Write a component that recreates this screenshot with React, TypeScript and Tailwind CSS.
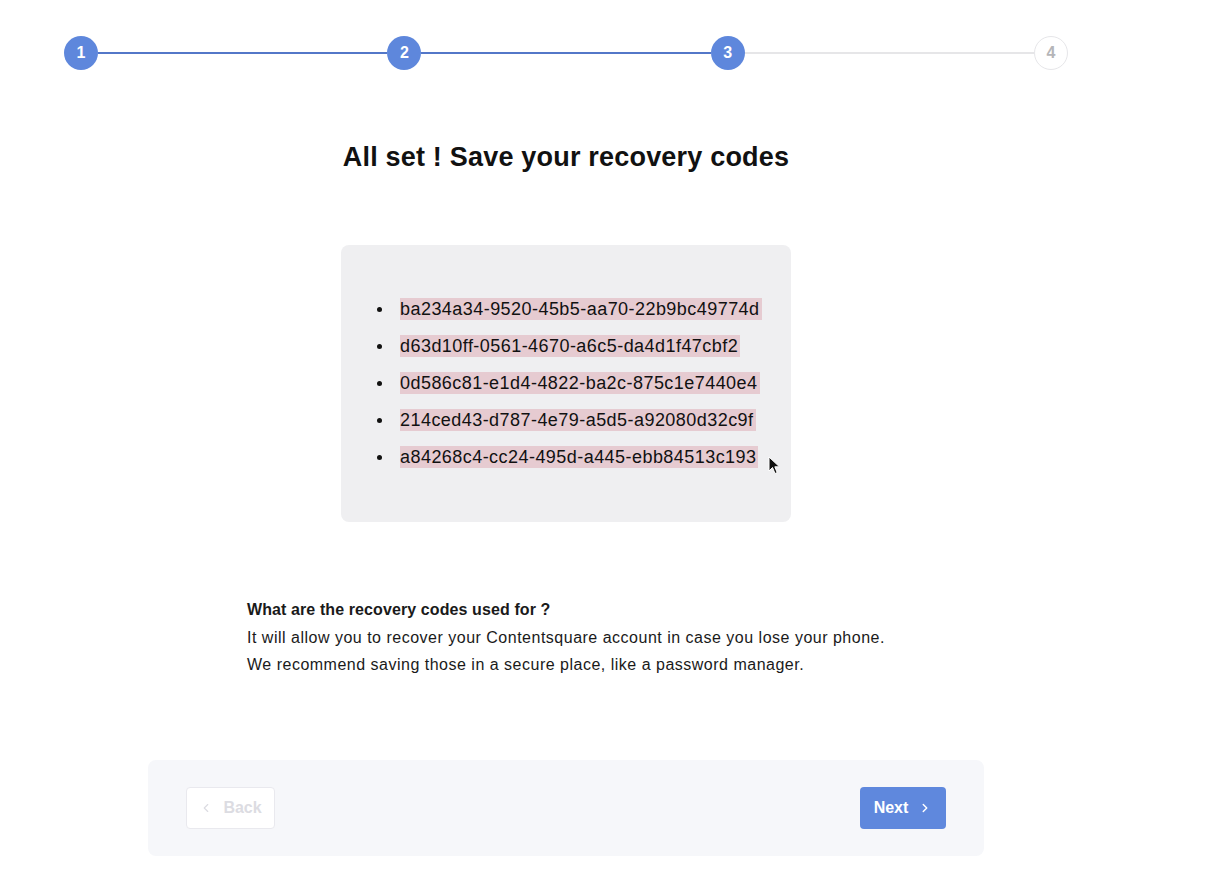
import { ChevronLeft, ChevronRight } from 'lucide-react'

const codes = [
  'ba234a34-9520-45b5-aa70-22b9bc49774d',
  'd63d10ff-0561-4670-a6c5-da4d1f47cbf2',
  '0d586c81-e1d4-4822-ba2c-875c1e7440e4',
  '214ced43-d787-4e79-a5d5-a92080d32c9f',
  'a84268c4-cc24-495d-a445-ebb84513c193',
]

function Step({ n, done }: { n: number; done: boolean }) {
  return (
    <div
      className={
        done
          ? 'flex h-[34px] w-[34px] shrink-0 items-center justify-center rounded-full bg-[#5e87dc] text-[16px] font-bold text-white'
          : 'flex h-[34px] w-[34px] shrink-0 items-center justify-center rounded-full border border-[#e6e6e9] bg-white text-[16px] font-bold text-[#b5b5b8]'
      }
    >
      {n}
    </div>
  )
}

function Line({ active }: { active: boolean }) {
  return <div className={active ? 'h-[2px] flex-1 bg-[#5377c8]' : 'h-[2px] flex-1 bg-[#e6e6e8]'} />
}

export default function App() {
  return (
    <div className="min-h-screen w-full bg-white font-['Liberation_Sans',Arial,sans-serif] text-[#111]">
      <div className="w-[1132px]">
        <div className="flex items-center px-[64px] pt-[36px]">
          <Step n={1} done />
          <Line active />
          <Step n={2} done />
          <Line active />
          <Step n={3} done />
          <Line active={false} />
          <Step n={4} done={false} />
        </div>

        <h1 className="mt-[71px] text-center text-[27px] font-bold leading-[32px] tracking-[0.2px] text-[#111]">
          All set ! Save your recovery codes
        </h1>

        <div className="relative mx-auto mt-[72px] h-[277px] w-[450px] rounded-[8px] bg-[#efeff1] pl-[36px] pt-[53px]">
          <ul className="flex flex-col gap-[15px]">
            {codes.map((c) => (
              <li key={c} className="flex items-center text-[18px] leading-[22px] tracking-[0.45px]">
                <span className="mr-[18px] h-[5px] w-[5px] rounded-full bg-[#111]" />
                <span className="bg-[#e6cbd1] pr-[2px]">{c}</span>
              </li>
            ))}
          </ul>
          <svg
            className="absolute left-[427px] top-[211px]"
            width="13"
            height="20"
            viewBox="0 0 13 20"
          >
            <path d="M1 1 L1 15 L4.5 11.5 L7 17.5 L9.2 16.6 L6.8 10.8 L11.5 10.8 Z" fill="#111" stroke="#fff" strokeWidth="1" />
          </svg>
        </div>

        <div className="mx-auto mt-[74px] w-[638px] text-[16px] leading-[27.5px] tracking-[0.5px] text-[#1a1a1a]">
          <p className="font-bold tracking-[0.1px]">What are the recovery codes used for ?</p>
          <p>It will allow you to recover your Contentsquare account in case you lose your phone.</p>
          <p>We recommend saving those in a secure place, like a password manager.</p>
        </div>

        <div className="mx-auto mt-[81px] flex h-[96px] w-[836px] items-center justify-between rounded-[8px] bg-[#f6f7fa] px-[38px]">
          <button className="flex h-[42px] w-[89px] items-center justify-center gap-[10px] rounded-[4px] border border-[#e9e9ee] bg-white text-[16px] font-bold text-[#dcdce2]">
            <ChevronLeft size={14} strokeWidth={2} />
            Back
          </button>
          <button className="flex h-[42px] w-[86px] items-center justify-center gap-[10px] rounded-[4px] bg-[#5f88dd] text-[16px] font-bold text-white">
            Next
            <ChevronRight size={14} strokeWidth={2.5} />
          </button>
        </div>
      </div>
    </div>
  )
}
